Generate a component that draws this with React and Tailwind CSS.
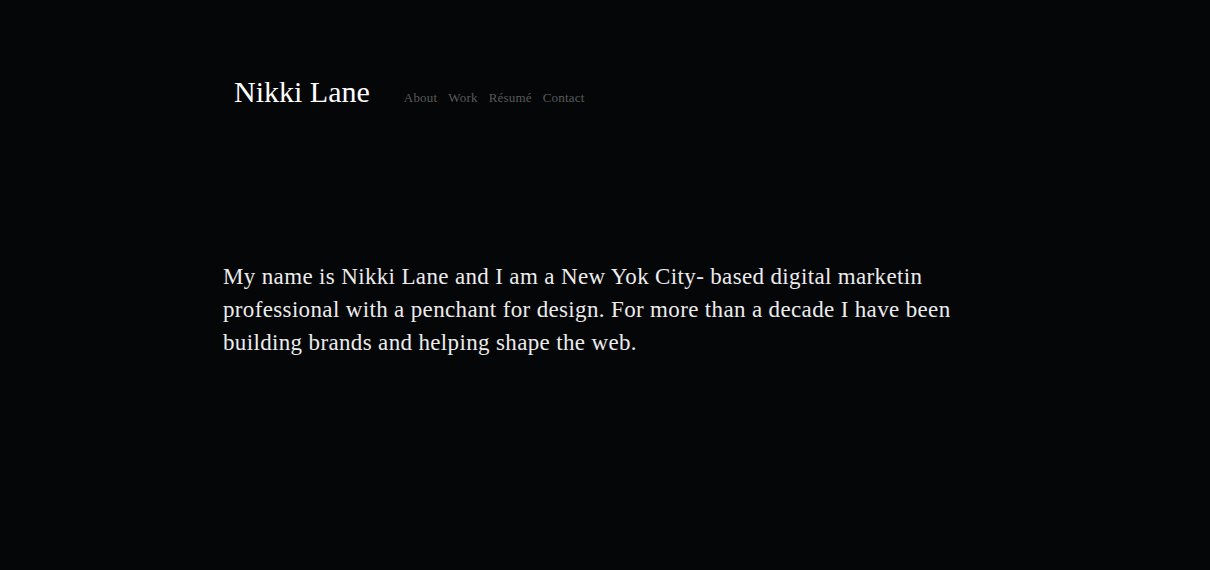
const App = () => {
  const links = ["About", "Work", "Résumé", "Contact"]

  return (
    <div className="min-h-screen bg-[#040608] text-[#f2f2f2] font-['Liberation_Serif',serif]">
      <div className="pl-[223px] pt-[73px]">
        {/* Header */}
        <header className="flex items-baseline">
          <h1 className="ml-[11px] text-[30px] leading-[38px] text-white">Nikki Lane</h1>
          <nav className="ml-[34px] flex gap-[11px] text-[13px] text-[#5a5a5a]">
            {links.map((link) => (
              <a key={link} href="#" className="tracking-[0.2px]">
                {link}
              </a>
            ))}
          </nav>
        </header>

        {/* Intro */}
        <p className="mt-[149px] w-[760px] text-[23px] leading-[33px] tracking-[0.35px] text-[#ececec]">
          My name is Nikki Lane and I am a New Yok City- based digital marketin professional with a
          penchant for design. For more than a decade I have been building brands and helping shape
          the web.
        </p>
      </div>
    </div>
  )
}

export default App
